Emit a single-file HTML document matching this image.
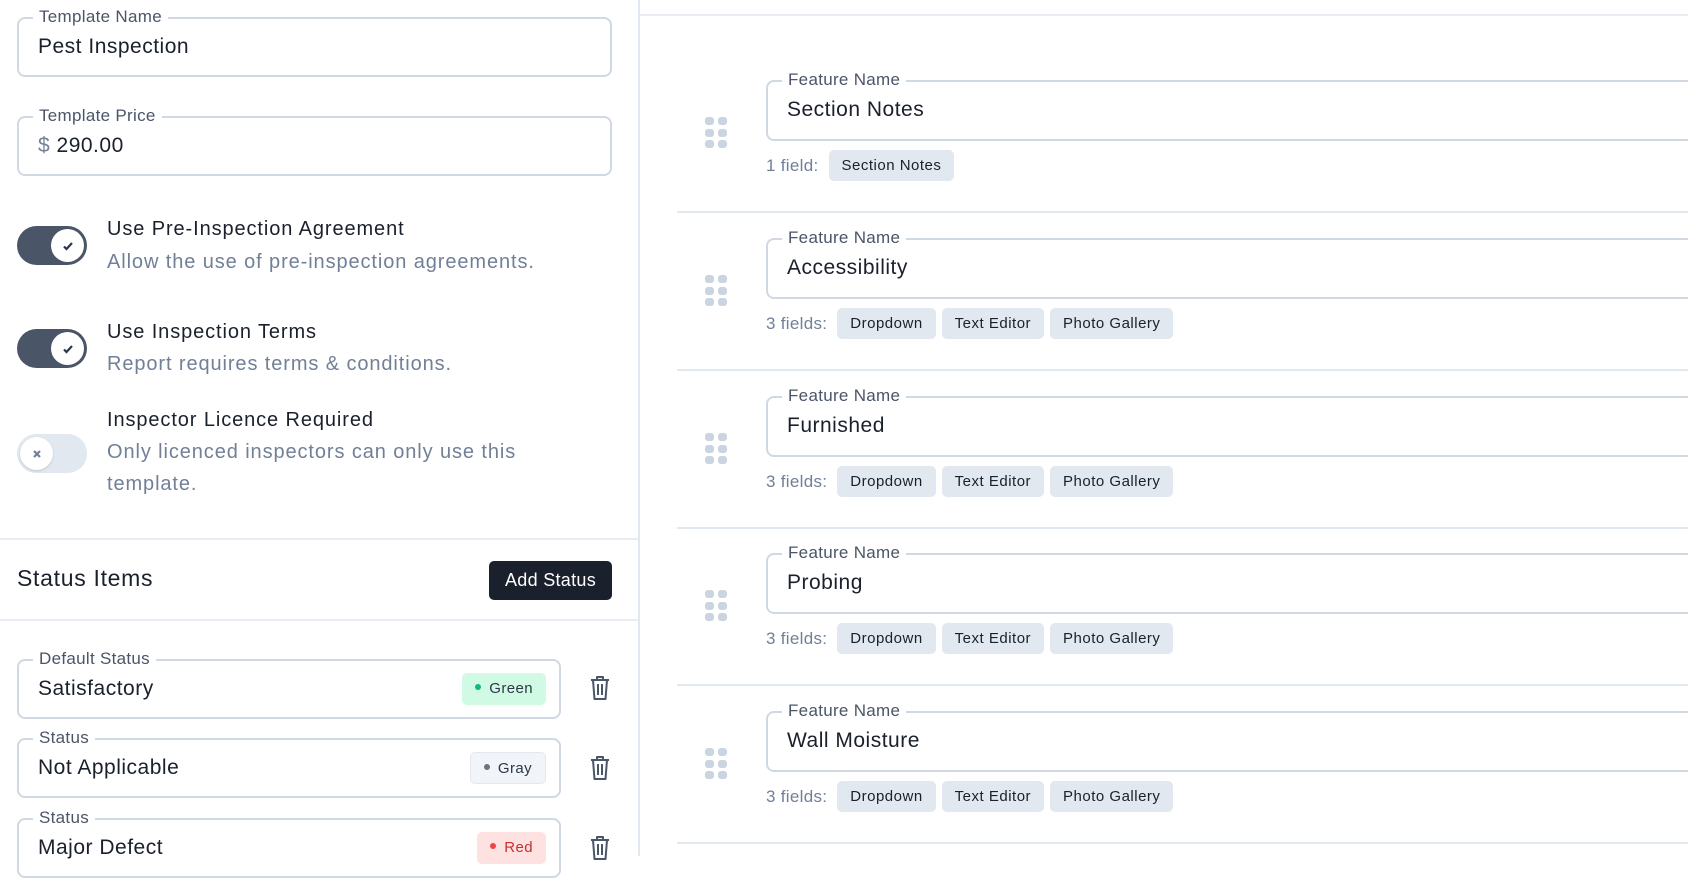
<!DOCTYPE html>
<html><head><meta charset="utf-8"><style>
*{box-sizing:border-box;margin:0;padding:0}
body{width:1688px;height:856px;overflow:hidden;background:#fff;font-family:"Liberation Sans",sans-serif;color:#1a202c;position:relative}
.a{position:absolute}
.inp{position:absolute;border:2px solid #cfd8e3;border-radius:8px;background:#fff}
.lbl{position:absolute;top:-12px;left:14px;background:#fff;padding:0 6px;font-size:17px;color:#4a5568;line-height:20px;letter-spacing:0.3px}
.val{position:absolute;left:19px;font-size:21px;color:#1a202c;letter-spacing:0.5px}
.tg{position:absolute;left:17px;width:70px;height:39px;border-radius:20px}
.tg.on{background:#4a5568}
.tg.off{background:#e2e8f0}
.knob{position:absolute;top:3px;width:33px;height:33px;border-radius:50%;background:#fff;display:flex;align-items:center;justify-content:center}
.tt{position:absolute;left:107px;font-size:20px;color:#1a202c;letter-spacing:0.9px}
.td{position:absolute;left:107px;font-size:20px;color:#718096;line-height:32px;letter-spacing:0.9px}
.chips{position:absolute;left:766px;display:flex;align-items:center;gap:6px;font-size:17px;color:#718096;letter-spacing:0.3px}
.chip{background:#e2e8f0;color:#1a202c;font-size:15px;height:31px;line-height:31px;padding:0 13px;border-radius:5px;letter-spacing:0.5px}
.sep{position:absolute;left:677px;right:0;height:2px;background:#e2e8f0}
.grip{position:absolute;left:705px;width:22px;height:32px;display:grid;grid-template-columns:9px 9px;grid-gap:3px 4px}
.grip i{display:block;width:9px;height:8px;border-radius:3px;background:#cbd5e1}
.badge{position:absolute;height:32px;border-radius:5px;font-size:15px;line-height:32px;padding:0 13px;color:#2d3748;letter-spacing:0.4px}
.badge b{display:inline-block;width:6px;height:6px;border-radius:50%;margin-right:8px;vertical-align:middle;position:relative;top:-2px}
.trash{position:absolute;left:589px}
</style></head><body>
<div class="a" style="left:638px;top:0;width:2px;height:856px;background:#e2e8f0"></div>
<div class="a" style="left:640px;top:14px;right:0;height:2px;background:#e8edf4"></div>

<div class="inp" style="left:17px;top:17px;width:595px;height:60px"><div class="lbl">Template Name</div><div class="val" style="top:16px">Pest Inspection</div></div>
<div class="inp" style="left:17px;top:116px;width:595px;height:60px"><div class="lbl">Template Price</div><div class="val" style="top:16px"><span style="color:#718096">$</span> 290.00</div></div>

<div class="tg on" style="top:226px"><div class="knob" style="left:34px"><svg width="14" height="14" viewBox="0 0 14 14"><path d="M3 7.5l2.5 2.5L11 4" stroke="#2d3748" stroke-width="2.2" fill="none"/></svg></div></div>
<div class="tt" style="top:218px">Use Pre-Inspection Agreement</div>
<div class="td" style="top:246px">Allow the use of pre-inspection agreements.</div>

<div class="tg on" style="top:329px"><div class="knob" style="left:34px"><svg width="14" height="14" viewBox="0 0 14 14"><path d="M3 7.5l2.5 2.5L11 4" stroke="#2d3748" stroke-width="2.2" fill="none"/></svg></div></div>
<div class="tt" style="top:321px">Use Inspection Terms</div>
<div class="td" style="top:348px">Report requires terms &amp; conditions.</div>

<div class="tg off" style="top:434px;box-shadow:inset 0 0 0 1px #e2e8f0"><div class="knob" style="left:3px;box-shadow:0 1px 2px rgba(0,0,0,.15)"><svg width="12" height="12" viewBox="0 0 12 12"><path d="M3 3l6 6M9 3l-6 6" stroke="#718096" stroke-width="2.2"/></svg></div></div>
<div class="tt" style="top:409px">Inspector Licence Required</div>
<div class="td" style="top:436px;width:440px">Only licenced inspectors can only use this template.</div>

<div class="a" style="left:0;top:538px;width:638px;height:2px;background:#e8edf4"></div>
<div class="a" style="left:17px;top:565px;font-size:23px;color:#1a202c;letter-spacing:0.7px">Status Items</div>
<div class="a" style="left:489px;top:561px;width:123px;height:39px;background:#1a202c;border-radius:5px;color:#fff;font-size:18px;line-height:39px;text-align:center;letter-spacing:0.3px">Add Status</div>
<div class="a" style="left:0;top:619px;width:638px;height:2px;background:#e8edf4"></div>

<div class="inp" style="left:17px;top:659px;width:544px;height:60px"><div class="lbl">Default Status</div><div class="val" style="top:16px">Satisfactory</div>
<div class="badge" style="right:13px;top:12px;background:#d1fae5"><b style="background:#10b981"></b>Green</div></div>
<div class="inp" style="left:17px;top:738px;width:544px;height:60px"><div class="lbl">Status</div><div class="val" style="top:16px">Not Applicable</div>
<div class="badge" style="right:13px;top:12px;background:#f1f5f9;border:1px solid #e2e8f0"><b style="background:#6b7280"></b>Gray</div></div>
<div class="inp" style="left:17px;top:818px;width:544px;height:60px"><div class="lbl">Status</div><div class="val" style="top:16px">Major Defect</div>
<div class="badge" style="right:13px;top:12px;background:#fee2e2;color:#c53030"><b style="background:#ef4444"></b>Red</div></div>

<svg class="trash" style="top:675px" width="22" height="26" viewBox="0 0 22 26"><path d="M2 5h18M8 5V2h6v3M4 5l1.5 19h11L18 5M9 9v11M13 9v11" stroke="#4a5568" stroke-width="2" fill="none" stroke-linejoin="round"/></svg>
<svg class="trash" style="top:755px" width="22" height="26" viewBox="0 0 22 26"><path d="M2 5h18M8 5V2h6v3M4 5l1.5 19h11L18 5M9 9v11M13 9v11" stroke="#4a5568" stroke-width="2" fill="none" stroke-linejoin="round"/></svg>
<svg class="trash" style="top:835px" width="22" height="26" viewBox="0 0 22 26"><path d="M2 5h18M8 5V2h6v3M4 5l1.5 19h11L18 5M9 9v11M13 9v11" stroke="#4a5568" stroke-width="2" fill="none" stroke-linejoin="round"/></svg>

<div class="inp" style="left:766px;top:80px;width:960px;height:61px"><div class="lbl">Feature Name</div><div class="val" style="top:16px">Section Notes</div></div>
<div class="grip" style="top:117px"><i></i><i></i><i></i><i></i><i></i><i></i></div>
<div class="chips" style="top:150px">1 field: <span class="chip" style="margin-left:4px">Section Notes</span></div>
<div class="sep" style="top:211px"></div>

<div class="inp" style="left:766px;top:238px;width:960px;height:61px"><div class="lbl">Feature Name</div><div class="val" style="top:16px">Accessibility</div></div>
<div class="grip" style="top:275px"><i></i><i></i><i></i><i></i><i></i><i></i></div>
<div class="chips" style="top:308px">3 fields: <span class="chip" style="margin-left:4px">Dropdown</span><span class="chip">Text Editor</span><span class="chip">Photo Gallery</span></div>
<div class="sep" style="top:369px"></div>

<div class="inp" style="left:766px;top:396px;width:960px;height:61px"><div class="lbl">Feature Name</div><div class="val" style="top:16px">Furnished</div></div>
<div class="grip" style="top:433px"><i></i><i></i><i></i><i></i><i></i><i></i></div>
<div class="chips" style="top:466px">3 fields: <span class="chip" style="margin-left:4px">Dropdown</span><span class="chip">Text Editor</span><span class="chip">Photo Gallery</span></div>
<div class="sep" style="top:527px"></div>

<div class="inp" style="left:766px;top:553px;width:960px;height:61px"><div class="lbl">Feature Name</div><div class="val" style="top:16px">Probing</div></div>
<div class="grip" style="top:590px"><i></i><i></i><i></i><i></i><i></i><i></i></div>
<div class="chips" style="top:623px">3 fields: <span class="chip" style="margin-left:4px">Dropdown</span><span class="chip">Text Editor</span><span class="chip">Photo Gallery</span></div>
<div class="sep" style="top:684px"></div>

<div class="inp" style="left:766px;top:711px;width:960px;height:61px"><div class="lbl">Feature Name</div><div class="val" style="top:16px">Wall Moisture</div></div>
<div class="grip" style="top:748px"><i></i><i></i><i></i><i></i><i></i><i></i></div>
<div class="chips" style="top:781px">3 fields: <span class="chip" style="margin-left:4px">Dropdown</span><span class="chip">Text Editor</span><span class="chip">Photo Gallery</span></div>
<div class="sep" style="top:842px"></div>
</body></html>
